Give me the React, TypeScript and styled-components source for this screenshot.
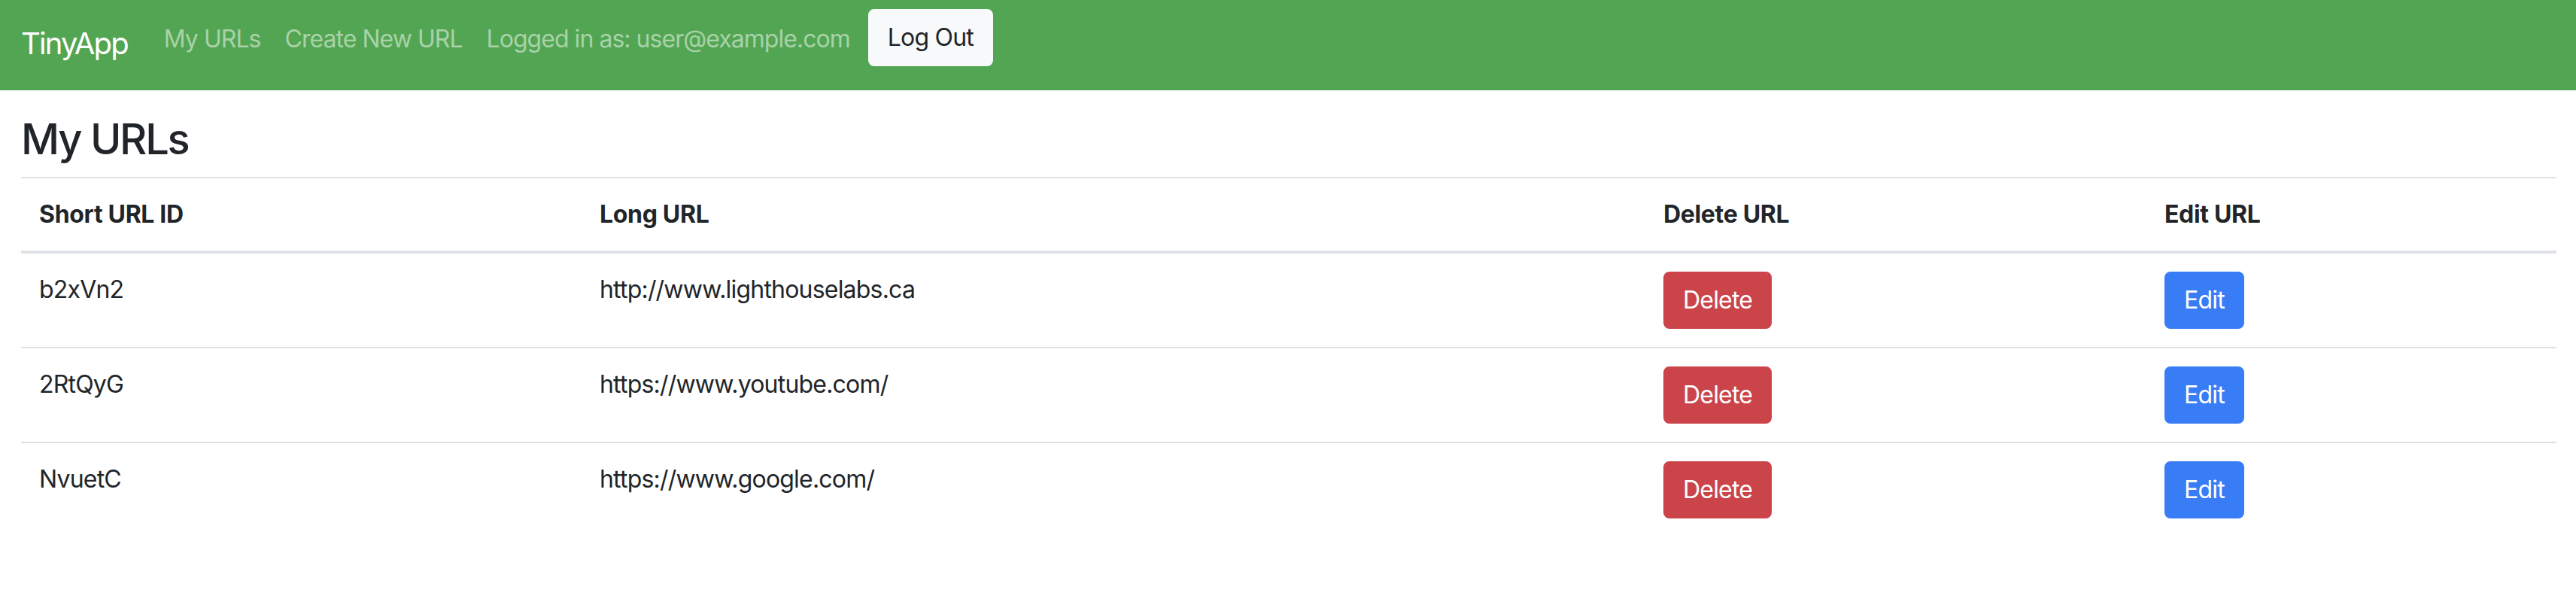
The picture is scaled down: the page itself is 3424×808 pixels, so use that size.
import React from "react";
import styled, { createGlobalStyle } from "styled-components";

const GlobalStyle = createGlobalStyle`
  *, *::before, *::after { box-sizing: border-box; }
  html, body {
    margin: 0;
    padding: 0;
    background: #ffffff;
    font-family: Inter, "Helvetica Neue", Arial, sans-serif;
    color: #212529;
    -webkit-font-smoothing: antialiased;
  }
`;

const Navbar = styled.nav`
  display: flex;
  align-items: flex-start;
  height: 120px;
  padding: 12px 28px 0 28px;
  background: #52a552;
`;

const Brand = styled.a`
  display: block;
  padding-top: 16px;
  margin-right: 32px;
  font-size: 40px;
  line-height: 60px;
  letter-spacing: -0.047em;
  color: #ffffff;
  text-decoration: none;
  white-space: nowrap;
`;

const NavList = styled.ul`
  display: flex;
  align-items: flex-start;
  list-style: none;
  margin: 0;
  padding: 0;
`;

const NavItem = styled.li`
  display: block;
`;

const LogoutItem = styled(NavItem)`
  margin-left: 8px;
`;

const NavLink = styled.a`
  display: block;
  padding: 16px;
  font-size: 32px;
  line-height: 48px;
  letter-spacing: -0.03em;
  color: rgba(255, 255, 255, 0.5);
  text-decoration: none;
  white-space: nowrap;
`;

const Button = styled.button<{ $variant: "light" | "danger" | "primary" }>`
  display: inline-block;
  padding: 12px 24px;
  font-family: inherit;
  font-size: 32px;
  line-height: 48px;
  font-weight: 400;
  letter-spacing: -0.025em;
  border-radius: 8px;
  border: 2px solid
    ${(p) =>
      p.$variant === "light" ? "#f8f9fa" : p.$variant === "danger" ? "#cb444a" : "#387cf6"};
  background: ${(p) =>
    p.$variant === "light" ? "#f8f9fa" : p.$variant === "danger" ? "#cb444a" : "#387cf6"};
  color: ${(p) => (p.$variant === "light" ? "#212529" : "#ffffff")};
  cursor: pointer;
  white-space: nowrap;
`;

const Main = styled.main`
  padding: 0 26px 0 28px;
`;

const Title = styled.h3`
  margin: 32px 0 16px 0;
  font-size: 56px;
  line-height: 67.2px;
  font-weight: 500;
  letter-spacing: -0.04em;
  color: #212529;
`;

const Table = styled.table`
  width: 100%;
  border-collapse: collapse;
  table-layout: fixed;
  color: #212529;
`;

const HeadCell = styled.th<{ $w: number }>`
  width: ${(p) => p.$w}%;
  padding: 24px;
  text-align: left;
  vertical-align: bottom;
  font-size: 32px;
  line-height: 48px;
  font-weight: 700;
  letter-spacing: -0.01em;
  border-top: 2px solid #dee2e6;
  border-bottom: 4px solid #dee2e6;
`;

const Cell = styled.td`
  padding: 24px;
  vertical-align: top;
  font-size: 32px;
  line-height: 48px;
  letter-spacing: -0.025em;
  border-top: 2px solid #dee2e6;
`;

const urls = [
  { id: "b2xVn2", long: "http://www.lighthouselabs.ca" },
  { id: "2RtQyG", long: "https://www.youtube.com/" },
  { id: "NvuetC", long: "https://www.google.com/" },
];

const columns = [
  { label: "Short URL ID", w: 22.107 },
  { label: "Long URL", w: 41.958 },
  { label: "Delete URL", w: 19.763 },
  { label: "Edit URL", w: 16.172 },
];

export default function App() {
  return (
    <>
      <GlobalStyle />
      <Navbar>
        <Brand href="#">TinyApp</Brand>
        <NavList>
          <NavItem>
            <NavLink href="#">My URLs</NavLink>
          </NavItem>
          <NavItem>
            <NavLink href="#">Create New URL</NavLink>
          </NavItem>
          <NavItem>
            <NavLink as="span">Logged in as: user@example.com</NavLink>
          </NavItem>
          <LogoutItem>
            <Button $variant="light">Log Out</Button>
          </LogoutItem>
        </NavList>
      </Navbar>
      <Main>
        <Title>My URLs</Title>
        <Table>
          <thead>
            <tr>
              {columns.map((c) => (
                <HeadCell key={c.label} $w={c.w}>
                  {c.label}
                </HeadCell>
              ))}
            </tr>
          </thead>
          <tbody>
            {urls.map((u) => (
              <tr key={u.id}>
                <Cell>{u.id}</Cell>
                <Cell>{u.long}</Cell>
                <Cell>
                  <Button $variant="danger">Delete</Button>
                </Cell>
                <Cell>
                  <Button $variant="primary">Edit</Button>
                </Cell>
              </tr>
            ))}
          </tbody>
        </Table>
      </Main>
    </>
  );
}
